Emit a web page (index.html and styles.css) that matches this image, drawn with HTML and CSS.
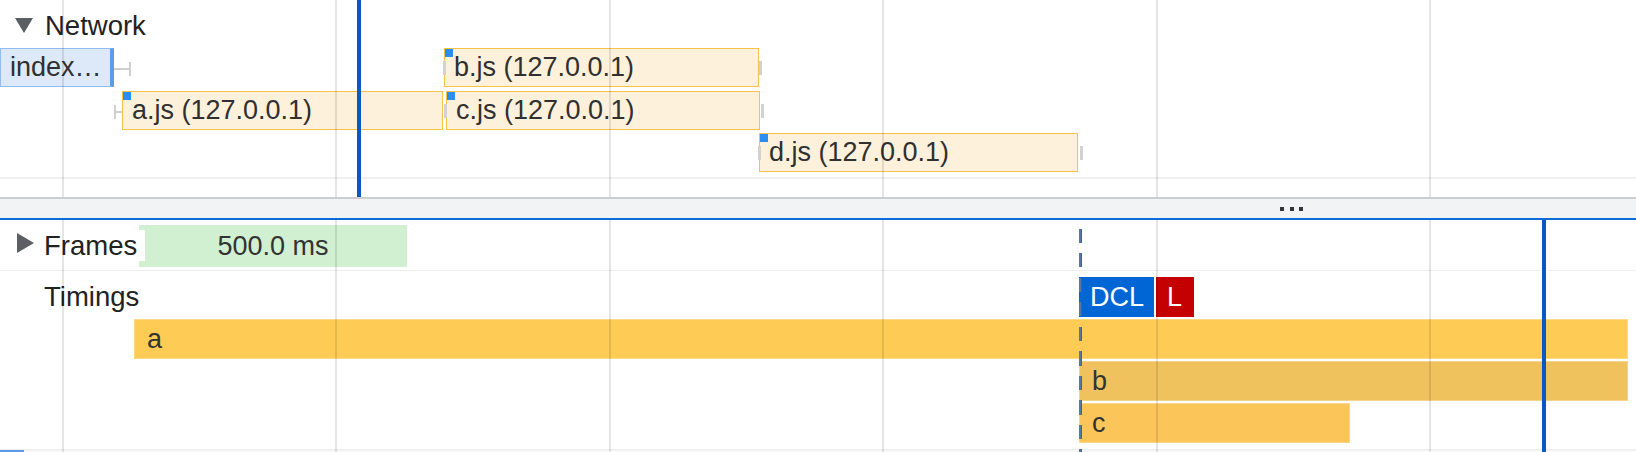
FILE: index.html
```html
<!DOCTYPE html>
<html lang="en">
<head>
<meta charset="utf-8">
<title>Performance timeline</title>
<link rel="stylesheet" href="styles.css">
</head>
<body>
<div class="timeline">
  <section class="pane pane-top">
    <div class="track-head">
      <svg class="tri tri-down" width="18" height="15" viewBox="0 0 18 15"><polygon points="0,0 18,0 9,15"/></svg>
      <span class="track-title">Network</span>
    </div>
    <div class="net-row net-row-first">
      <div class="req req-doc" style="left:0;width:114px">index…</div>
      <div class="whisker whisker-r" style="left:114px;width:17px"></div>
      <div class="req" style="left:444px;width:315px">b.js (127.0.0.1)</div>
      <div class="tick" style="left:443px"></div>
      <div class="tick" style="left:759px"></div>
    </div>
    <div class="net-row">
      <div class="whisker whisker-l" style="left:114px;width:8px"></div>
      <div class="req" style="left:122px;width:321px">a.js (127.0.0.1)</div>
      <div class="req" style="left:446px;width:314px">c.js (127.0.0.1)</div>
      <div class="tick" style="left:444px"></div>
      <div class="tick" style="left:761px"></div>
    </div>
    <div class="net-row">
      <div class="req" style="left:759px;width:319px">d.js (127.0.0.1)</div>
      <div class="tick" style="left:758px"></div>
      <div class="tick" style="left:1080px"></div>
    </div>
    <div class="row-sep"></div>
    <div class="grid"><i></i><i></i><i></i><i></i><i></i><i></i></div>
    <div class="cursor" style="left:357px"></div>
  </section>

  <div class="divider">
    <div class="grip"><i></i><i></i><i></i></div>
  </div>

  <section class="pane pane-bottom">
    <div class="frames-row">
      <div class="track-label">
        <svg class="tri tri-right" width="17" height="20" viewBox="0 0 17 20"><polygon points="0,0 17,10 0,20"/></svg>
        <span class="label-text label-frames">Frames</span>
      </div>
      <div class="frame" style="left:139px;width:268px">500.0 ms</div>
    </div>
    <div class="timings">
      <div class="t-head">
        <span class="label-text">Timings</span>
        <div class="mark mark-dcl" style="left:1079px">DCL</div>
        <div class="mark mark-l" style="left:1156px">L</div>
      </div>
      <div class="t-row"><div class="tbar tbar-a" style="left:134px;width:1494px">a</div></div>
      <div class="t-row"><div class="tbar tbar-b" style="left:1079px;width:549px">b</div></div>
      <div class="t-row"><div class="tbar tbar-c" style="left:1079px;width:271px">c</div></div>
    </div>
    <div class="pane-foot"><span class="thumb"></span></div>
    <div class="grid"><i></i><i></i><i></i><i></i><i></i><i></i></div>
    <div class="marker" style="left:1079px"></div>
    <div class="cursor" style="left:1542px"></div>
  </section>
</div>
</body>
</html>
```

FILE: styles.css
```css
* { box-sizing: border-box; }

html, body {
  margin: 0;
  padding: 0;
  background: #fff;
}

body {
  width: 1636px;
  height: 452px;
  overflow: hidden;
  font-family: "Liberation Sans", Arial, Helvetica, sans-serif;
  font-size: 27px;
  color: #222;
}

.timeline {
  display: flex;
  flex-direction: column;
  height: 452px;
}

.pane {
  position: relative;
  overflow: hidden;
  flex: none;
}

.pane-top { height: 197px; }
.pane-bottom { height: 232px; }

/* ---------- track headers ---------- */
.track-head {
  height: 47px;
  display: flex;
  align-items: flex-start;
  padding-left: 15px;
}

.tri { fill: #5b5e62; flex: none; }
.tri-down { margin-top: 18px; }

.track-title {
  margin-left: 12px;
  margin-top: 10px;
  font-size: 27.5px;
  line-height: 31px;
  color: #222;
}

/* ---------- network rows ---------- */
.net-row {
  position: relative;
  height: 42px;
}
.net-row-first { height: 43px; }

.req {
  position: absolute;
  top: 1px;
  height: 39px;
  border: 1px solid #f6c24a;
  background: #fdf1dc;
  color: #303030;
  line-height: 37px;
  padding-left: 9px;
  white-space: nowrap;
  overflow: hidden;
}
.req::before {
  content: "";
  position: absolute;
  left: 0;
  top: 0;
  width: 8px;
  height: 8px;
  background: #2b8def;
}

.req-doc {
  background: #dde9f8;
  border: 1px solid #8fbdf0;
  border-right: 4px solid #5a9de8;
}
.req-doc::before { display: none; }

.whisker {
  position: absolute;
  top: 15px;
  height: 14px;
  background: linear-gradient(#cfcfcf, #cfcfcf) center / 100% 2px no-repeat;
}
.whisker-r { border-right: 2px solid #cfcfcf; }
.whisker-l { border-left: 2px solid #cfcfcf; }

.tick {
  position: absolute;
  top: 14px;
  width: 3px;
  height: 14px;
  background: #d2d2d2;
}

.row-sep {
  margin-top: 3px;
  height: 2px;
  background: #f0f0f0;
}

/* ---------- overlays ---------- */
.grid {
  position: absolute;
  inset: 0;
  display: flex;
  gap: 271.4px;
  padding-left: 62px;
  pointer-events: none;
  z-index: 3;
}
.grid i {
  flex: none;
  width: 2px;
  height: 100%;
  background: rgba(0, 0, 0, 0.1);
}

.cursor {
  position: absolute;
  top: 0;
  bottom: 0;
  width: 4px;
  background: #0b57c4;
  z-index: 5;
}

/* ---------- divider ---------- */
.divider {
  flex: none;
  height: 23px;
  border-top: 2px solid #cbcdd1;
  border-bottom: 2px solid #0b6bd9;
  background: #f1f3f4;
  display: flex;
  align-items: center;
}
.grip {
  margin-left: 1280px;
  display: flex;
  gap: 5.5px;
}
.grip i {
  width: 4px;
  height: 4px;
  background: #303438;
}

/* ---------- frames ---------- */
.frames-row {
  position: relative;
  height: 51px;
  border-bottom: 1px solid #eeeeee;
}
.track-label {
  position: relative;
  z-index: 2;
  display: flex;
  align-items: flex-start;
  padding-left: 17px;
}
.tri-right { margin-top: 13px; }
.label-frames {
  margin-left: 10px;
  margin-top: 10px;
  padding: 0 8px 0 0;
  background: #fff;
}
.label-text {
  font-size: 27.5px;
  line-height: 31px;
  color: #222;
}
.frame {
  position: absolute;
  top: 5px;
  height: 42px;
  background: #d1f0d1;
  color: #333;
  line-height: 42px;
  text-align: center;
  white-space: nowrap;
}

/* ---------- timings ---------- */
.timings {
  padding-bottom: 4px;
}
.t-head {
  position: relative;
  height: 48px;
  padding-left: 44px;
  padding-top: 10px;
}
.mark {
  position: absolute;
  top: 6px;
  height: 40px;
  line-height: 40px;
  padding: 0 11px;
  color: #fff;
  white-space: nowrap;
}
.mark-dcl { background: #0066d6; width: 75px; }
.mark-l { background: #c40000; width: 38px; }

.t-row {
  position: relative;
  height: 42px;
}
.tbar {
  position: absolute;
  top: 0;
  height: 40px;
  line-height: 40px;
  padding-left: 13px;
  color: #333;
  box-shadow: inset 0 0 0 1px rgba(255, 255, 255, 0.28);
  white-space: nowrap;
  overflow: hidden;
}
.tbar-a { background: #fecc55; }
.tbar-b { background: #efc25e; }
.tbar-c { background: #fbc55a; }

.pane-foot {
  height: 3px;
  border-top: 1px solid #ececec;
  background: #f6f6f6;
}
.thumb {
  display: block;
  width: 24px;
  height: 2px;
  background: #5c9ce6;
}

/* ---------- dashed event markers ---------- */
.marker {
  position: absolute;
  top: 9px;
  bottom: 0;
  width: 3px;
  z-index: 4;
  pointer-events: none;
}
.marker::before,
.marker::after {
  content: "";
  position: absolute;
  top: 0;
  bottom: 0;
  width: 1.5px;
}
.marker::before {
  left: 0;
  background: repeating-linear-gradient(to bottom, #5577a3 0 14px, transparent 14px 24.5px);
}
.marker::after {
  left: 1.5px;
  background: repeating-linear-gradient(to bottom, #e3262b 0 14px, transparent 14px 24.5px);
}
```
